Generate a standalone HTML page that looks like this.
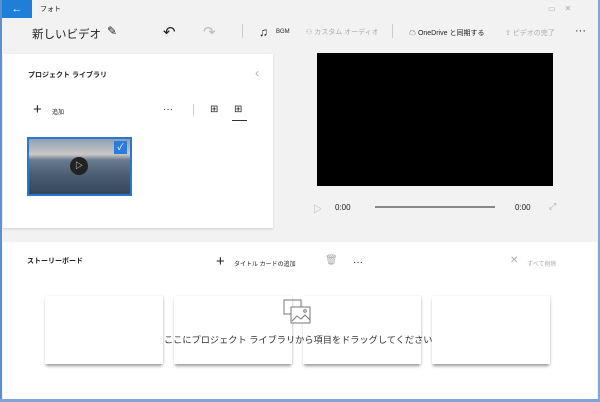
<!DOCTYPE html>
<html><head><meta charset="utf-8"><style>
*{margin:0;padding:0;box-sizing:border-box}
body{width:600px;height:402px;background:#f2f2f2;position:relative;overflow:hidden;font-family:"Liberation Sans","Noto Sans CJK JP",sans-serif;color:#222}
.a{position:absolute;white-space:nowrap}
.g{color:#aaa}
</style></head><body>
<div class="a" style="left:0;top:0;width:2px;height:402px;background:#5b8fd0"></div>
<div class="a" style="right:0;top:0;width:2px;height:402px;background:#7fa6d6"></div>
<div class="a" style="left:0;bottom:0;width:600px;height:3px;background:#7fa6d6"></div>
<div class="a" style="left:2px;top:0;width:30px;height:18px;background:#1f7fd8;color:#fff;font-size:11px;text-align:center;line-height:18px">←</div>
<div class="a" style="left:40px;top:4px;font-size:7px">フォト</div>
<div class="a g" style="left:548px;top:4px;font-size:8px">▭ &nbsp;&nbsp; ✕</div>
<div class="a" style="left:32px;top:26px;font-size:11.5px">新しいビデオ</div>
<div class="a" style="left:107px;top:24px;font-size:12px">✎</div>
<div class="a" style="left:163px;top:23px;font-size:15px">↶</div>
<div class="a" style="left:203px;top:23px;font-size:15px;color:#bbb">↷</div>
<div class="a" style="left:242px;top:24px;width:1px;height:14px;background:#ccc"></div>
<div class="a" style="left:259px;top:25px;font-size:12px">♫</div>
<div class="a" style="left:276px;top:29px;font-size:6px">BGM</div>
<div class="a g" style="left:306px;top:27px;font-size:7px">⚇ カスタム オーディオ</div>
<div class="a" style="left:392px;top:24px;width:1px;height:14px;background:#ccc"></div>
<div class="a" style="left:409px;top:28px;font-size:7px">☁ OneDrive と同期する</div>
<div class="a g" style="left:505px;top:28px;font-size:7px">⇪ ビデオの完了</div>
<div class="a" style="left:575px;top:25px;font-size:11px">···</div>

<div class="a" style="left:3px;top:54px;width:270px;height:174px;background:#fff;box-shadow:0 1px 2px #ccc"></div>
<div class="a" style="left:28px;top:70px;font-size:7px;font-weight:bold">プロジェクト ライブラリ</div>
<div class="a g" style="left:255px;top:66px;font-size:12px">‹</div>
<div class="a" style="left:33px;top:102px;font-size:15px;line-height:15px">+</div>
<div class="a" style="left:52px;top:107px;font-size:6px">追加</div>
<div class="a" style="left:163px;top:104px;font-size:10px">···</div>
<div class="a" style="left:193px;top:104px;width:1px;height:12px;background:#ccc"></div>
<div class="a" style="left:210px;top:104px;font-size:10px">⊞</div>
<div class="a" style="left:234px;top:104px;font-size:10px">⊞</div>
<div class="a" style="left:232px;top:120px;width:15px;height:1px;background:#333"></div>
<div class="a" style="left:27px;top:137px;width:105px;height:59px;border:2px solid #2b77c9;background:linear-gradient(#8fa0b4 0%,#c9c8c6 28%,#6a7c90 38%,#4a5d72 65%,#34475c 100%)"></div>
<div class="a" style="left:114px;top:141px;width:13px;height:13px;background:#2b7bd9;color:#fff;font-size:9px;line-height:13px;text-align:center">✓</div>
<div class="a" style="left:70px;top:157px;width:18px;height:18px;border-radius:50%;background:#222;color:#fff;font-size:8px;line-height:18px;text-align:center">▷</div>

<div class="a" style="left:317px;top:53px;width:236px;height:133px;background:#000"></div>
<div class="a g" style="left:313px;top:202px;font-size:9px">▷</div>
<div class="a" style="left:335px;top:203px;font-size:8px">0:00</div>
<div class="a" style="left:375px;top:206px;width:120px;height:2px;background:#888"></div>
<div class="a" style="left:515px;top:203px;font-size:8px">0:00</div>
<div class="a g" style="left:549px;top:201px;font-size:9px">⤢</div>

<div class="a" style="left:3px;top:242px;width:594px;height:157px;background:#fff"></div>
<div class="a" style="left:27px;top:256px;font-size:7px;font-weight:bold">ストーリーボード</div>
<div class="a" style="left:216px;top:254px;font-size:15px;line-height:15px">+</div>
<div class="a" style="left:234px;top:259px;font-size:6px">タイトル カードの追加</div>
<div class="a g" style="left:325px;top:255px;font-size:10px">🗑</div>
<div class="a" style="left:353px;top:257px;font-size:10px">···</div>
<div class="a g" style="left:510px;top:255px;font-size:10px">✕</div>
<div class="a g" style="left:527px;top:259px;font-size:6px">すべて削除</div>
<div class="a" style="left:45px;top:296px;width:118px;height:68px;background:#fff;box-shadow:0 3px 3px -1px #999,1px 0 2px #e8e8e8"></div>
<div class="a" style="left:174px;top:296px;width:118px;height:68px;background:#fff;box-shadow:0 3px 3px -1px #999,1px 0 2px #e8e8e8"></div>
<div class="a" style="left:303px;top:296px;width:118px;height:68px;background:#fff;box-shadow:0 3px 3px -1px #999,1px 0 2px #e8e8e8"></div>
<div class="a" style="left:432px;top:296px;width:118px;height:68px;background:#fff;box-shadow:0 3px 3px -1px #999,1px 0 2px #e8e8e8"></div>
<svg class="a" style="left:283px;top:299px" width="30" height="26" viewBox="0 0 30 26" fill="none" stroke="#777" stroke-width="1"><rect x="1" y="1" width="17" height="14"/><rect x="8" y="8" width="19" height="16" fill="#fff"/><path d="M9 22l5-5 4 3 4-4 5 5"/><circle cx="22" cy="12" r="1.3"/></svg>
<div class="a" style="left:164px;top:332px;font-size:9.2px;color:#333">ここにプロジェクト ライブラリから項目をドラッグしてください</div>
</body></html>
